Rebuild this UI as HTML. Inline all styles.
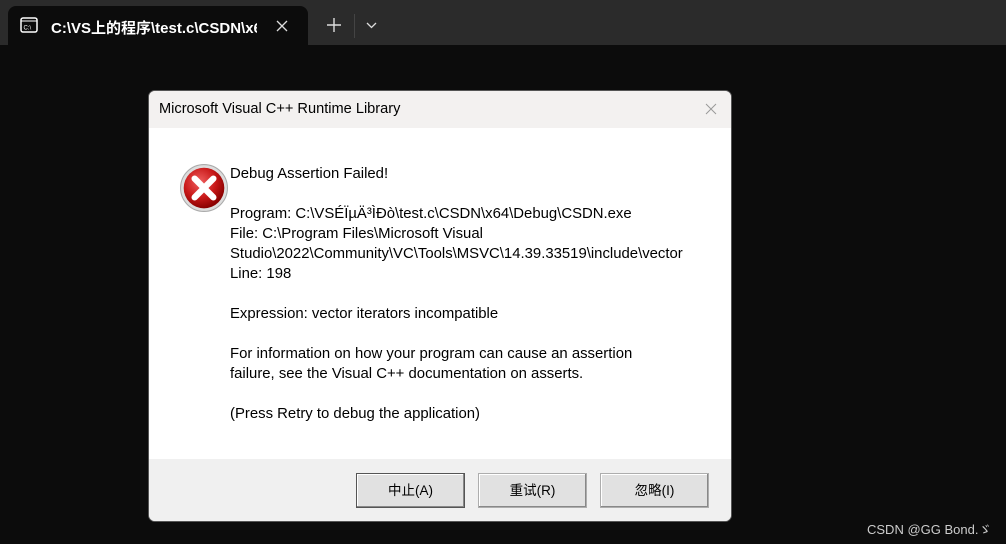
<!DOCTYPE html>
<html><head><meta charset="utf-8"><style>
*{margin:0;padding:0;box-sizing:border-box}
body{width:1006px;height:544px;background:#0c0c0c;position:relative;overflow:hidden;font-family:"Liberation Sans","Noto Sans CJK SC",sans-serif}
.top{position:absolute;left:0;top:0;width:1006px;height:45px;background:#2b2b2b}
.tab{position:absolute;left:8px;top:6px;width:300px;height:40px;background:#0c0c0c;border-radius:8px 8px 0 0}
.tab .t{position:absolute;left:43px;top:11px;color:#fff;font-size:15px;font-weight:bold;white-space:nowrap;width:206px;overflow:hidden}
.dlg{position:absolute;left:148px;top:90px;width:584px;height:432px;background:#fff;border-radius:7px;overflow:hidden;border:1px solid #555}
.tb{height:37px;background:#f3f1f0;font-size:14.6px;color:#000;padding:10px 0 0 10px}
.foot{position:absolute;left:0;top:368px;width:100%;height:64px;background:#f0f0f0}
.txt{position:absolute;left:81px;top:73px;font-size:14.9px;line-height:20px;color:#000;white-space:nowrap}
.btn{position:absolute;top:14px;height:35px;width:109px;border:1px solid #adadad;background:#e1e1e1;font-size:13.5px;text-align:center;line-height:33px;box-shadow:inset -1px -1px 0 #888,inset 1px 1px 0 #fff}
.wm{position:absolute;left:867px;top:519px;color:#ccc;font-size:13px}
</style></head><body>
<div class="top"></div>
<div class="tab">
<svg style="position:absolute;left:12px;top:11px" width="18" height="16" viewBox="0 0 18 16"><rect x="1" y="1" width="16" height="14" rx="2" fill="none" stroke="#fff" stroke-width="1.5"/><line x1="1" y1="4" x2="17" y2="4" stroke="#fff"/><text x="3.5" y="12.5" font-size="6" fill="#fff" font-family="Liberation Sans">C:\</text></svg>
<div class="t">C:\VS上的程序\test.c\CSDN\x64</div>
<svg style="position:absolute;left:268px;top:14px" width="12" height="12"><path d="M1 1L11 11M11 1L1 11" stroke="#ddd" stroke-width="1.3"/></svg>
</div>
<svg style="position:absolute;left:327px;top:18px" width="14" height="14"><path d="M7 0V14M0 7H14" stroke="#ddd" stroke-width="1.4"/></svg>
<div style="position:absolute;left:354px;top:14px;width:1px;height:24px;background:#444"></div>
<svg style="position:absolute;left:366px;top:22px" width="11" height="7"><path d="M1 1L5.5 5.5L10 1" stroke="#ddd" stroke-width="1.3" fill="none"/></svg>
<div class="dlg">
<div class="tb">Microsoft Visual C++ Runtime Library</div>
<svg style="position:absolute;left:556px;top:12px" width="12" height="12"><path d="M1 1L11 11M11 1L1 11" stroke="#999" stroke-width="1"/></svg>
<svg style="position:absolute;left:30px;top:72px" width="50" height="50" viewBox="0 0 48 48"><defs><radialGradient id="g" cx="40%" cy="35%" r="65%"><stop offset="0" stop-color="#f06060"/><stop offset="0.6" stop-color="#c81818"/><stop offset="1" stop-color="#8a0000"/></radialGradient></defs><circle cx="24" cy="24" r="22.5" fill="#ddd" stroke="#aaa"/><circle cx="24" cy="24" r="19.5" fill="url(#g)"/><path d="M15 15L33 33M33 15L15 33" stroke="#fff" stroke-width="6" stroke-linecap="round"/></svg>
<div class="txt">Debug Assertion Failed!<br><br>Program: C:\VSÉÏµÄ³ÌÐò\test.c\CSDN\x64\Debug\CSDN.exe<br>File: C:\Program Files\Microsoft Visual<br>Studio\2022\Community\VC\Tools\MSVC\14.39.33519\include\vector<br>Line: 198<br><br>Expression: vector iterators incompatible<br><br>For information on how your program can cause an assertion<br>failure, see the Visual C++ documentation on asserts.<br><br>(Press Retry to debug the application)</div>
<div class="foot">
<div class="btn" style="left:207px;border-color:#555">中止(A)</div>
<div class="btn" style="left:329px">重试(R)</div>
<div class="btn" style="left:451px">忽略(I)</div>
</div>
</div>
<div class="wm">CSDN @GG Bond.ゞ</div>
</body></html>
